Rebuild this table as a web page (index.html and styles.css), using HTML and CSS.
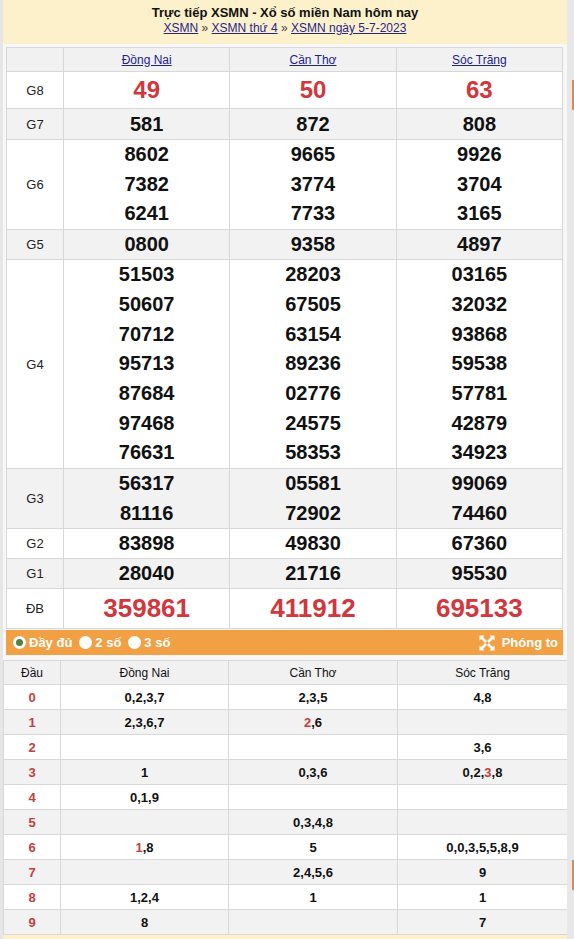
FILE: index.html
```html
<!DOCTYPE html>
<html lang="vi">
<head>
<meta charset="utf-8">
<title>XSMN</title>
<link rel="stylesheet" href="styles.css">
</head>
<body>
<div class="page">
  <div class="lstrip"></div>
  <main class="main">
    <header class="head">
      <h1>Trực tiếp XSMN - Xổ số miền Nam hôm nay</h1>
      <nav class="crumb"><a href="#">XSMN</a> » <a href="#">XSMN thứ 4</a> » <a href="#">XSMN ngày 5-7-2023</a></nav>
    </header>
    <section class="box">
      <table class="kq">
        <colgroup><col class="c0"><col><col><col></colgroup>
        <thead>
          <tr><th></th><th><a href="#">Đồng Nai</a></th><th><a href="#">Cần Thơ</a></th><th><a href="#">Sóc Trăng</a></th></tr>
        </thead>
        <tbody>
          <tr class="g8"><td class="lb">G8</td><td><div class="n big">49</div></td><td><div class="n big">50</div></td><td><div class="n big">63</div></td></tr>
          <tr class="alt g7"><td class="lb">G7</td><td><div class="n">581</div></td><td><div class="n">872</div></td><td><div class="n">808</div></td></tr>
          <tr><td class="lb">G6</td>
            <td><div class="n">8602</div><div class="n">7382</div><div class="n">6241</div></td>
            <td><div class="n">9665</div><div class="n">3774</div><div class="n">7733</div></td>
            <td><div class="n">9926</div><div class="n">3704</div><div class="n">3165</div></td></tr>
          <tr class="alt s"><td class="lb">G5</td><td><div class="n">0800</div></td><td><div class="n">9358</div></td><td><div class="n">4897</div></td></tr>
          <tr><td class="lb">G4</td>
            <td><div class="n">51503</div><div class="n">50607</div><div class="n">70712</div><div class="n">95713</div><div class="n">87684</div><div class="n">97468</div><div class="n">76631</div></td>
            <td><div class="n">28203</div><div class="n">67505</div><div class="n">63154</div><div class="n">89236</div><div class="n">02776</div><div class="n">24575</div><div class="n">58353</div></td>
            <td><div class="n">03165</div><div class="n">32032</div><div class="n">93868</div><div class="n">59538</div><div class="n">57781</div><div class="n">42879</div><div class="n">34923</div></td></tr>
          <tr class="alt"><td class="lb">G3</td>
            <td><div class="n">56317</div><div class="n">81116</div></td>
            <td><div class="n">05581</div><div class="n">72902</div></td>
            <td><div class="n">99069</div><div class="n">74460</div></td></tr>
          <tr class="s"><td class="lb">G2</td><td><div class="n">83898</div></td><td><div class="n">49830</div></td><td><div class="n">67360</div></td></tr>
          <tr class="alt s"><td class="lb">G1</td><td><div class="n">28040</div></td><td><div class="n">21716</div></td><td><div class="n">95530</div></td></tr>
          <tr class="db"><td class="lb">ĐB</td><td><div class="n huge">359861</div></td><td><div class="n huge">411912</div></td><td><div class="n huge">695133</div></td></tr>
        </tbody>
      </table>
      <div class="bar">
        <label class="opt"><span class="radio on"></span>Đầy đủ</label>
        <label class="opt"><span class="radio"></span>2 số</label>
        <label class="opt"><span class="radio"></span>3 số</label>
        <span class="zoom">
          <svg width="16" height="16" viewBox="0 0 16 16" aria-hidden="true">
            <g fill="#fff">
              <polygon points="0.5,0.5 5.5,0.5 0.5,5.5"/>
              <polygon points="15.5,0.5 10.5,0.5 15.5,5.5"/>
              <polygon points="0.5,15.5 0.5,10.5 5.5,15.5"/>
              <polygon points="15.5,15.5 10.5,15.5 15.5,10.5"/>
            </g>
            <g stroke="#fff" stroke-width="2.6" stroke-linecap="butt">
              <line x1="2.5" y1="2.5" x2="7" y2="7"/>
              <line x1="13.5" y1="2.5" x2="9" y2="7"/>
              <line x1="2.5" y1="13.5" x2="7" y2="9"/>
              <line x1="13.5" y1="13.5" x2="9" y2="9"/>
            </g>
          </svg>
          Phóng to
        </span>
      </div>
    </section>
    <table class="loto">
      <colgroup><col class="d0"><col class="d1"><col class="d2"><col class="d3"></colgroup>
      <thead>
        <tr><th>Đầu</th><th>Đồng Nai</th><th>Cần Thơ</th><th>Sóc Trăng</th></tr>
      </thead>
      <tbody>
        <tr><td class="h">0</td><td>0,2,3,7</td><td>2,3,5</td><td>4,8</td></tr>
        <tr class="alt"><td class="h">1</td><td>2,3,6,7</td><td><span class="r">2</span>,6</td><td></td></tr>
        <tr><td class="h">2</td><td></td><td></td><td>3,6</td></tr>
        <tr class="alt"><td class="h">3</td><td>1</td><td>0,3,6</td><td>0,2,<span class="r">3</span>,8</td></tr>
        <tr><td class="h">4</td><td>0,1,9</td><td></td><td></td></tr>
        <tr class="alt"><td class="h">5</td><td></td><td>0,3,4,8</td><td></td></tr>
        <tr><td class="h">6</td><td><span class="r">1</span>,8</td><td>5</td><td>0,0,3,5,5,8,9</td></tr>
        <tr class="alt"><td class="h">7</td><td></td><td>2,4,5,6</td><td>9</td></tr>
        <tr><td class="h">8</td><td>1,2,4</td><td>1</td><td>1</td></tr>
        <tr class="alt"><td class="h">9</td><td>8</td><td></td><td>7</td></tr>
      </tbody>
    </table>
  </main>
  <aside class="rstrip"><span class="mark m1"></span><span class="mark m2"></span></aside>
</div>
</body>
</html>
```

FILE: styles.css
```css
* { box-sizing: border-box; }
body {
  margin: 0;
  font-family: "Liberation Sans", Arial, sans-serif;
  background: #e8e8e8;
  color: #111;
}
.page {
  display: flex;
  width: 574px;
  height: 939px;
  overflow: hidden;
}
.lstrip {
  width: 3px;
  flex: none;
  background: #e6e6e6;
}
.main {
  width: 564px;
  flex: none;
  background: #fcf1ca;
}
.head {
  height: 44px;
  padding-top: 4px;
  text-align: center;
}
.head h1 {
  margin: 0;
  font-size: 13px;
  line-height: 17px;
  font-weight: bold;
  color: #111;
}
.crumb {
  font-size: 12px;
  line-height: 15px;
  color: #444;
}
.crumb a {
  color: #26268c;
  text-decoration: underline;
}
.box {
  background: #f7f7f7;
  padding: 3px 4px 5px 3px;
}
.kq {
  width: 557px;
  border-collapse: collapse;
  table-layout: fixed;
  background: #fff;
}
.kq col.c0 { width: 57px; }
.kq th, .kq td {
  border: 1px solid #d8d8d8;
  padding: 0;
  text-align: center;
  vertical-align: middle;
}
.kq thead th {
  height: 24px;
  background: #f1f1f1;
  font-weight: normal;
  font-size: 12px;
}
.kq thead a {
  color: #22228a;
  text-decoration: underline;
}
.kq tr.alt td { background: #f2f2f2; }
.kq .lb {
  font-size: 13px;
  color: #222;
}
.kq .n {
  font-size: 20px;
  font-weight: bold;
  line-height: 29.7px;
  color: #111;
}
.kq .g7 .n { line-height: 30px; }
.kq .s .n { line-height: 29px; }
.kq .n.big {
  font-size: 24px;
  line-height: 36px;
  color: #d1373c;
}
.kq .n.huge {
  font-size: 26px;
  line-height: 39px;
  color: #d1373c;
}
.bar {
  margin-top: 1px;
  width: 557px;
  height: 25px;
  background: #f1a043;
  display: flex;
  align-items: center;
  padding: 0 5px 0 7px;
  color: #fff;
  font-size: 13px;
  font-weight: bold;
}
.opt {
  display: flex;
  align-items: center;
  margin-right: 7px;
}
.radio {
  width: 13px;
  height: 13px;
  border-radius: 50%;
  background: #fff;
  margin-right: 3px;
}
.radio.on {
  background: #557d48;
  border: 3px solid #fff;
}
.zoom {
  margin-left: auto;
  display: flex;
  align-items: center;
  gap: 7px;
}
.loto {
  width: 564px;
  border-collapse: collapse;
  table-layout: fixed;
  background: #fff;
}
.loto col.d0 { width: 57px; }
.loto col.d1 { width: 168px; }
.loto col.d2 { width: 169px; }
.loto col.d3 { width: 170px; }
.loto th, .loto td {
  border: 1px solid #d8d8d8;
  padding: 0;
  text-align: center;
  height: 25px;
  font-size: 13px;
}
.loto th {
  height: 24px;
  font-size: 12px;
  font-weight: normal;
  background: #f1f1f1;
  color: #111;
}
.loto td {
  font-weight: bold;
  color: #111;
}
.loto tr.alt td { background: #f2f2f2; }
.loto td.h { color: #c0403f; }
.loto .r { color: #c0403f; }
.rstrip {
  width: 7px;
  flex: none;
  background: #e8e8e8;
  display: flex;
  flex-direction: column;
  align-items: flex-end;
}
.mark {
  width: 2px;
  height: 30px;
  background: #e3894f;
}
.m1 { margin-top: 80px; }
.m2 { margin-top: 750px; }
```
